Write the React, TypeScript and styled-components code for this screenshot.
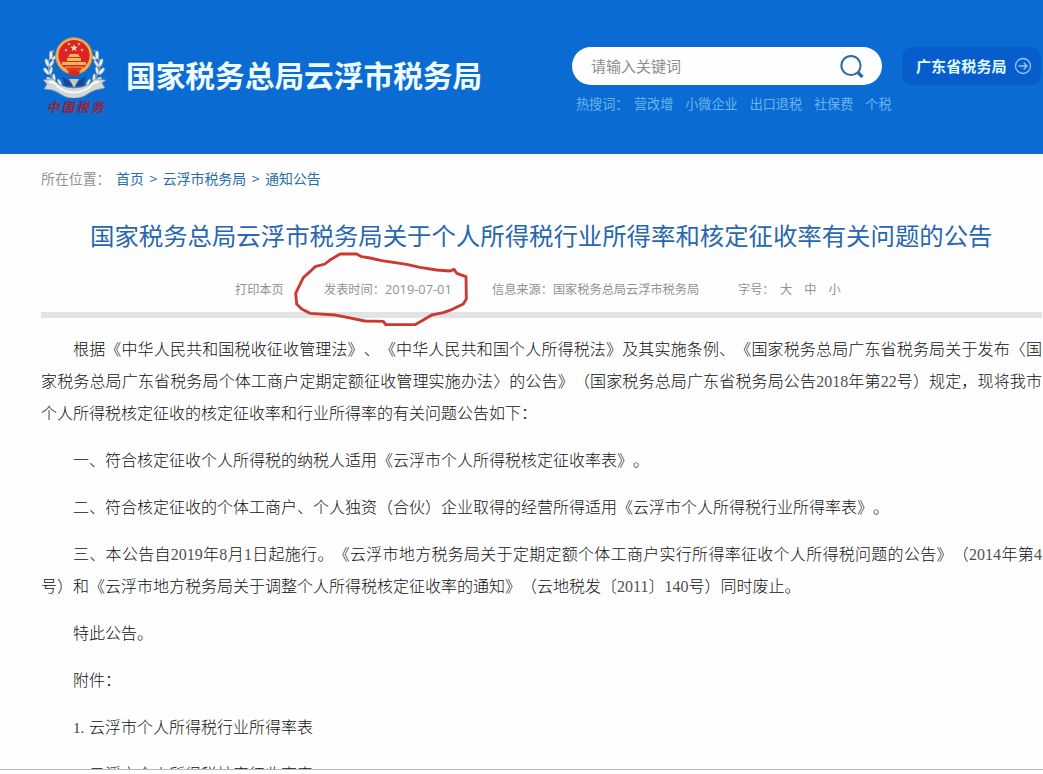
import React from "react";
import styled, { createGlobalStyle } from "styled-components";

const sans = `"Noto Sans CJK SC", sans-serif`;

const GlobalStyle = createGlobalStyle`
  * { box-sizing: border-box; }
  body { margin: 0; background: #fefefe; overflow: hidden; font-family: ${sans}; text-spacing-trim: space-all; }
  a { color: inherit; text-decoration: none; }
  p, h1 { margin: 0; }
`;

const Page = styled.div`
  width: 1043px;
  height: 774px;
  overflow: hidden;
  display: flex;
  flex-direction: column;
`;

const Header = styled.header`
  height: 154px;
  flex: none;
  background: #0a6cd3;
  display: flex;
  align-items: flex-start;
  padding-left: 38px;
  white-space: nowrap;
`;

const Logo = styled.div`
  width: 72px;
  margin: 32px 16px 0 0;
  display: flex;
  flex-direction: column;
  align-items: center;
`;

const LogoText = styled.span`
  font: italic 700 13px/16px ${sans};
  letter-spacing: 1.7px;
  color: #97203a;
  margin: 1px 0 0 4px;
`;

const SiteName = styled.div`
  width: 446px;
  padding-top: 53px;
  font-size: 29.7px;
  font-weight: 700;
  line-height: 44px;
  color: #effcff;
`;

const Search = styled.div`
  width: 310px;
  margin-right: 20px;
  padding-top: 47px;
`;

const SearchBox = styled.div`
  height: 38px;
  border-radius: 19px;
  background: #fefefe;
  display: flex;
  align-items: center;
  justify-content: space-between;
  padding: 0 17px 0 19px;
  font-size: 15px;
  color: #8d8d8d;
`;

const Placeholder = styled.span`
  padding-bottom: 2px;
`;

const HotWords = styled.div`
  display: flex;
  gap: 12px;
  padding: 9px 0 0 4px;
  font-size: 13.1px;
  line-height: 20px;
  color: #6cb4ee;
  span { width: 46px; }
`;

const RegionButton = styled.a`
  margin-top: 47px;
  width: 139px;
  height: 38px;
  border-radius: 10px;
  background: #075dcb;
  display: flex;
  align-items: center;
  justify-content: space-between;
  padding: 0 9px 0 14px;
  font-size: 15.1px;
  font-weight: 700;
  color: #dff8ff;
`;

const RegionName = styled.span`
  padding-bottom: 2px;
`;

const Main = styled.main`
  width: 1002px;
  height: 615px;
  margin-left: 41px;
  overflow: hidden;
  flex: none;
`;

const Crumbs = styled.nav`
  display: flex;
  padding-top: 14px;
  font-size: 13.9px;
  line-height: 20px;
  color: #286da8;
  white-space: pre;
`;

const CrumbLabel = styled.span`
  width: 75px;
  color: #929292;
`;

const CrumbSeparator = styled.span`
  width: 19px;
  text-align: center;
`;

const Title = styled.h1`
  margin-top: 28px;
  padding-left: 49px;
  font-size: 24.4px;
  font-weight: 400;
  line-height: 38px;
  color: #2767af;
  white-space: nowrap;
`;

const Meta = styled.div`
  position: relative;
  width: 1001px;
  height: 64px;
  border-bottom: 6px solid #e3e3e3;
  display: flex;
  padding: 25px 0 0 194px;
  font-size: 12.2px;
  line-height: 20px;
  color: #929292;
  white-space: nowrap;
`;

const MetaItem = styled.span<{ $width: number; $gap?: number }>`
  width: ${(p) => p.$width}px;
  display: flex;
  gap: ${(p) => p.$gap ?? 0}px;
`;

const PublishDate = styled.span`
  font-family: "Open Sans", ${sans};
  font-size: 12.8px;
`;

const Marker = styled.svg`
  position: absolute;
  left: 249px;
  top: -9px;
`;

const Article = styled.article`
  width: 1001px;
  padding-top: 16px;
  font: 16px/32px "Liberation Serif", "Noto Sans CJK SC", serif;
  font-weight: 300;
  color: #101010;
`;

const Paragraph = styled.p`
  text-indent: 32px;
  text-align: justify;
  margin-bottom: 15px;
`;

const Digits = styled.span`
  color: #505050;
`;

const ItemNumber = styled.span`
  display: inline-block;
  width: 16px;
  text-indent: 0;
  font-size: 15px;
  line-height: 20px;
  color: #404040;
`;

const BottomRule = styled.div`
  height: 1px;
  flex: none;
  background: #b9b9b9;
`;

const leaves = [
  [11, 25, 25], [7, 32, 5], [6, 40, -15], [9, 48, -35], [15, 54, -55],
];

function Emblem() {
  const wreath = (
    <g fill="none" stroke="#dfe9ea" strokeWidth="1">
      <path d="M16 18C6 30 9 49 29 57" stroke="#b3c3c8" />
      {leaves.map(([x, y, r]) => (
        <g key={y} transform={`translate(${x + 4} ${y - 2}) rotate(${r})`} fill="#e8eeea" stroke="#74889a" strokeWidth=".5">
          <ellipse cx="-2" cy="0" rx="1.8" ry="4.2" transform="rotate(-25)" />
          <ellipse cx="3" cy="0" rx="1.5" ry="4" transform="rotate(28)" />
        </g>
      ))}
    </g>
  );
  const star = "M0-4 1-1.2 4-1.2 1.6.6 2.5 3.5 0 1.7-2.5 3.5-1.6.6-4-1.2-1-1.2Z";
  return (
    <svg width="72" height="66" viewBox="0 0 72 66">
      {wreath}
      <g transform="translate(72 0) scale(-1 1)">{wreath}</g>
      <path d="M24 44 36 53 48 44 45 54H27Z" fill="#1d448f" />
      <path d="M31 47 36 56 41 47Z" fill="#c8c7b0" />
      <path d="M5 48 15 47 20 52Q36 60 52 52L57 47 68 48 64 51 67 56 58 58 53 60Q36 73 19 60L14 58 6 57 9 52Z" fill="#d2d8d8" stroke="#7c8991" strokeWidth=".7" />
      <path d="M11 50Q18 50 20 55Q36 66 52 55Q55 50 61 50" fill="none" stroke="#fafcf6" strokeWidth="2" />
      <circle cx="36" cy="24" r="18.3" fill="#e9b65b" stroke="#c98f42" strokeWidth="1" />
      <circle cx="36" cy="23.5" r="15.6" fill="#df2524" />
      <path d={star} transform="translate(36 16) scale(.95)" fill="#fff0c0" />
      {[[28, 18], [44, 18], [31, 12], [41, 12]].map(([x, y]) => (
        <path key={`${x}-${y}`} d={star} transform={`translate(${x} ${y}) scale(.4)`} fill="#ffe6b8" />
      ))}
      <path d="M32 22H40L42 25H30ZM29 26H43V29H29ZM24 30H48V33H24Z" fill="#f3b85c" />
      <path d="M27 35H45L42 40H30Z" fill="#e23725" stroke="#e9a747" strokeWidth="1" />
      <path d="M30 40Q36 37 42 40L40 44H32Z" fill="#cf2b22" />
    </svg>
  );
}

const hotWords = ["营改增", "小微企业", "出口退税", "社保费", "个税"];

const clauses = [
  "根据《中华人民共和国税收征收管理法》、《中华人民共和国个人所得税法》及其实施条例、《国家税务总局广东省税务局关于发布〈国家税务总局广东省税务局个体工商户定期定额征收管理实施办法〉的公告》（国家税务总局广东省税务局公告2018年第22号）规定，现将我市个人所得税核定征收的核定征收率和行业所得率的有关问题公告如下：",
  "一、符合核定征收个人所得税的纳税人适用《云浮市个人所得税核定征收率表》。",
  "二、符合核定征收的个体工商户、个人独资（合伙）企业取得的经营所得适用《云浮市个人所得税行业所得率表》。",
  "三、本公告自2019年8月1日起施行。《云浮市地方税务局关于定期定额个体工商户实行所得率征收个人所得税问题的公告》（2014年第4号）和《云浮市地方税务局关于调整个人所得税核定征收率的通知》（云地税发〔2011〕140号）同时废止。",
  "特此公告。",
  "附件：",
];

const attachments = ["云浮市个人所得税行业所得率表", "云浮市个人所得税核定征收率表"];

function withDigits(text: string) {
  return text.split(/(\d+)/).map((part, i) => (i % 2 ? <Digits key={i}>{part}</Digits> : part));
}

export default function App() {
  return (
    <Page>
      <GlobalStyle />
      <Header>
        <Logo>
          <Emblem />
          <LogoText>中国税务</LogoText>
        </Logo>
        <SiteName>国家税务总局云浮市税务局</SiteName>
        <Search>
          <SearchBox>
            <Placeholder>请输入关键词</Placeholder>
            <svg width="26" height="26" viewBox="0 0 26 26" fill="none" stroke="#2c6ba6">
              <circle cx="12" cy="12.5" r="9.6" strokeWidth="2" />
              <path d="m18.5 19 5 5" strokeWidth="3.2" />
            </svg>
          </SearchBox>
          <HotWords>
            <span>热搜词：</span>
            {hotWords.map((word) => <a key={word}>{word}</a>)}
          </HotWords>
        </Search>
        <RegionButton>
          <RegionName>广东省税务局</RegionName>
          <svg width="18" height="18" viewBox="0 0 18 18" fill="none" stroke="#8fc8f5" strokeWidth="1.3">
            <circle cx="9" cy="9" r="7.5" />
            <path d="M4.5 9h8.5M9.7 5.7 13 9l-3.3 3.3" />
          </svg>
        </RegionButton>
      </Header>
      <Main>
        <Crumbs>
          <CrumbLabel>所在位置：</CrumbLabel>
          <a>首页</a>
          <CrumbSeparator>&gt;</CrumbSeparator>
          <a>云浮市税务局</a>
          <CrumbSeparator>&gt;</CrumbSeparator>
          <a>通知公告</a>
        </Crumbs>
        <Title>国家税务总局云浮市税务局关于个人所得税行业所得率和核定征收率有关问题的公告</Title>
        <Meta>
          <MetaItem $width={89}>打印本页</MetaItem>
          <MetaItem $width={168}>发表时间：<PublishDate>2019-07-01</PublishDate></MetaItem>
          <MetaItem $width={246}>信息来源：国家税务总局云浮市税务局</MetaItem>
          <MetaItem $width={42}>字号：</MetaItem>
          <MetaItem $width={80} $gap={12}><a>大</a><a>中</a><a>小</a></MetaItem>
          <Marker width="190" height="90" viewBox="0 0 570 270" fill="none" stroke="#cc3931" strokeWidth="8.5" strokeLinejoin="round" strokeLinecap="round">
            <path d="M150 27H200L215 35 240 39 275 47 350 58 390 67 440 75 480 78 492 73 500 85 528 95 529 162 520 177 487 193 460 203 425 210 400 225 375 239H287L280 229 225 228 160 215 135 210 60 205 35 192 20 177 17 145 30 118 40 98 60 80 75 65 105 57 120 45Z" />
          </Marker>
        </Meta>
        <Article>
          {clauses.map((text) => <Paragraph key={text}>{withDigits(text)}</Paragraph>)}
          {attachments.map((name, i) => (
            <Paragraph key={name}><ItemNumber>{i + 1}.</ItemNumber>{name}</Paragraph>
          ))}
        </Article>
      </Main>
      <BottomRule />
    </Page>
  );
}
